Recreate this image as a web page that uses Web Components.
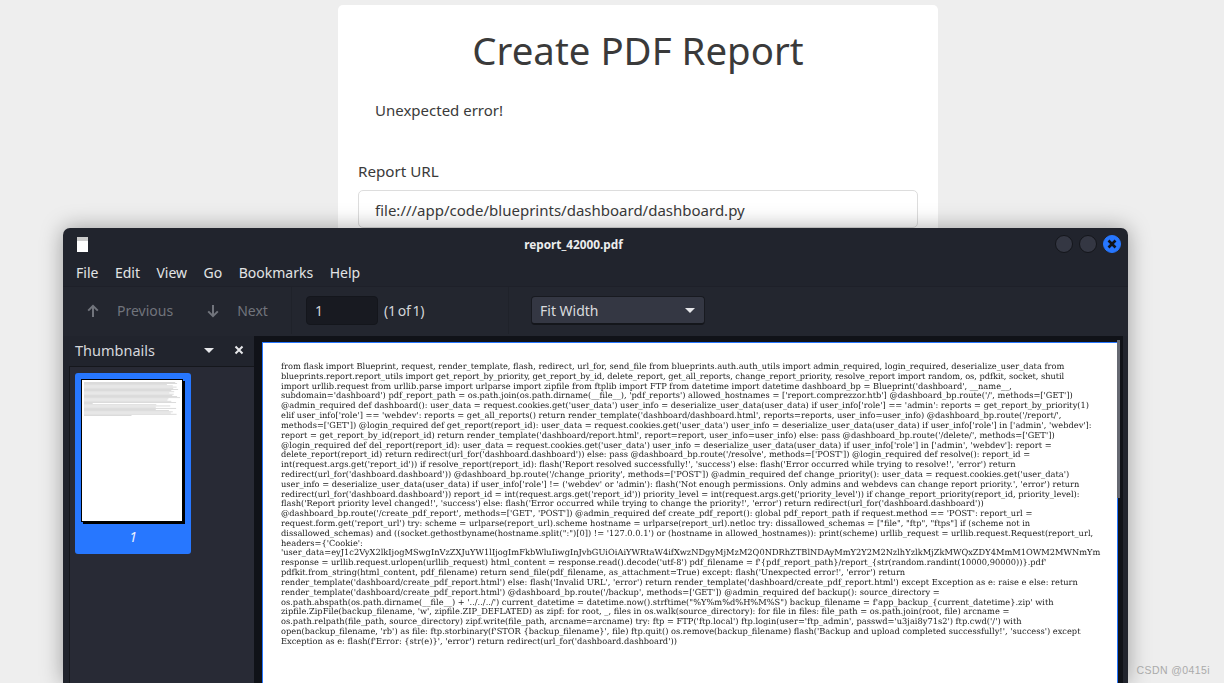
<!DOCTYPE html>
<html>
<head>
<meta charset="utf-8">
<title>Create PDF Report</title>
<style>
  html, body { margin: 0; height: 100%; overflow: hidden; background: #eeeeee; }
  body { position: relative; font-family: "Noto Sans", sans-serif; }
</style>
</head>
<body>
<report-form></report-form>
<pdf-viewer></pdf-viewer>
<csdn-mark>CSDN @0415i</csdn-mark>

<script>
const pdfLines = [
  "from flask import Blueprint, request, render_template, flash, redirect, url_for, send_file from blueprints.auth.auth_utils import admin_required, login_required, deserialize_user_data from",
  "blueprints.report.report_utils import get_report_by_priority, get_report_by_id, delete_report, get_all_reports, change_report_priority, resolve_report import random, os, pdfkit, socket, shutil",
  "import urllib.request from urllib.parse import urlparse import zipfile from ftplib import FTP from datetime import datetime dashboard_bp = Blueprint('dashboard', __name__,",
  "subdomain='dashboard') pdf_report_path = os.path.join(os.path.dirname(__file__), 'pdf_reports') allowed_hostnames = ['report.comprezzor.htb'] @dashboard_bp.route('/', methods=['GET'])",
  "@admin_required def dashboard(): user_data = request.cookies.get('user_data') user_info = deserialize_user_data(user_data) if user_info['role'] == 'admin': reports = get_report_by_priority(1)",
  "elif user_info['role'] == 'webdev': reports = get_all_reports() return render_template('dashboard/dashboard.html', reports=reports, user_info=user_info) @dashboard_bp.route('/report/',",
  "methods=['GET']) @login_required def get_report(report_id): user_data = request.cookies.get('user_data') user_info = deserialize_user_data(user_data) if user_info['role'] in ['admin', 'webdev']:",
  "report = get_report_by_id(report_id) return render_template('dashboard/report.html', report=report, user_info=user_info) else: pass @dashboard_bp.route('/delete/', methods=['GET'])",
  "@login_required def del_report(report_id): user_data = request.cookies.get('user_data') user_info = deserialize_user_data(user_data) if user_info['role'] in ['admin', 'webdev']: report =",
  "delete_report(report_id) return redirect(url_for('dashboard.dashboard')) else: pass @dashboard_bp.route('/resolve', methods=['POST']) @login_required def resolve(): report_id =",
  "int(request.args.get('report_id')) if resolve_report(report_id): flash('Report resolved successfully!', 'success') else: flash('Error occurred while trying to resolve!', 'error') return",
  "redirect(url_for('dashboard.dashboard')) @dashboard_bp.route('/change_priority', methods=['POST']) @admin_required def change_priority(): user_data = request.cookies.get('user_data')",
  "user_info = deserialize_user_data(user_data) if user_info['role'] != ('webdev' or 'admin'): flash('Not enough permissions. Only admins and webdevs can change report priority.', 'error') return",
  "redirect(url_for('dashboard.dashboard')) report_id = int(request.args.get('report_id')) priority_level = int(request.args.get('priority_level')) if change_report_priority(report_id, priority_level):",
  "flash('Report priority level changed!', 'success') else: flash('Error occurred while trying to change the priority!', 'error') return redirect(url_for('dashboard.dashboard'))",
  "@dashboard_bp.route('/create_pdf_report', methods=['GET', 'POST']) @admin_required def create_pdf_report(): global pdf_report_path if request.method == 'POST': report_url =",
  "request.form.get('report_url') try: scheme = urlparse(report_url).scheme hostname = urlparse(report_url).netloc try: dissallowed_schemas = [\"file\", \"ftp\", \"ftps\"] if (scheme not in",
  "dissallowed_schemas) and ((socket.gethostbyname(hostname.split(\":\")[0]) != '127.0.0.1') or (hostname in allowed_hostnames)): print(scheme) urllib_request = urllib.request.Request(report_url,",
  "headers={'Cookie':",
  "'user_data=eyJ1c2VyX2lkIjogMSwgInVzZXJuYW1lIjogImFkbWluIiwgInJvbGUiOiAiYWRtaW4ifXwzNDgyMjMzM2Q0NDRhZTBlNDAyMmY2Y2M2NzlhYzlkMjZkMWQxZDY4MmM1OWM2MWNmYm",
  "response = urllib.request.urlopen(urllib_request) html_content = response.read().decode('utf-8') pdf_filename = f'{pdf_report_path}/report_{str(random.randint(10000,90000))}.pdf'",
  "pdfkit.from_string(html_content, pdf_filename) return send_file(pdf_filename, as_attachment=True) except: flash('Unexpected error!', 'error') return",
  "render_template('dashboard/create_pdf_report.html') else: flash('Invalid URL', 'error') return render_template('dashboard/create_pdf_report.html') except Exception as e: raise e else: return",
  "render_template('dashboard/create_pdf_report.html') @dashboard_bp.route('/backup', methods=['GET']) @admin_required def backup(): source_directory =",
  "os.path.abspath(os.path.dirname(__file__) + '../../../') current_datetime = datetime.now().strftime(\"%Y%m%d%H%M%S\") backup_filename = f'app_backup_{current_datetime}.zip' with",
  "zipfile.ZipFile(backup_filename, 'w', zipfile.ZIP_DEFLATED) as zipf: for root, _, files in os.walk(source_directory): for file in files: file_path = os.path.join(root, file) arcname =",
  "os.path.relpath(file_path, source_directory) zipf.write(file_path, arcname=arcname) try: ftp = FTP('ftp.local') ftp.login(user='ftp_admin', passwd='u3jai8y71s2') ftp.cwd('/') with",
  "open(backup_filename, 'rb') as file: ftp.storbinary(f'STOR {backup_filename}', file) ftp.quit() os.remove(backup_filename) flash('Backup and upload completed successfully!', 'success') except",
  "Exception as e: flash(f'Error: {str(e)}', 'error') return redirect(url_for('dashboard.dashboard'))"
];

class ReportForm extends HTMLElement {
  constructor() {
    super();
    this.attachShadow({ mode: 'open' }).innerHTML = `
      <style>
        :host { display: block; width: 600px; margin: 5px 0 0 338px; box-sizing: border-box; height: 400px;
          background: #fff; border-radius: 5px; padding: 0 20px; color: #3a3a3a; font-family: "Noto Sans", sans-serif; }
        h1 { margin: 0; padding-top: 20px; font-size: 38.4px; line-height: 50px; font-weight: 400; text-align: center; }
        .flash { margin: 23px 0 0 17px; font-size: 15px; line-height: 24px; }
        label { display: block; margin-top: 37px; font-size: 15.2px; line-height: 24px; }
        .field { margin-top: 7px; height: 38px; box-sizing: border-box; border: 1px solid #ddd; border-radius: 5px;
          padding: 0 16px; font-size: 15px; line-height: 38px; }
      </style>
      <h1>Create PDF Report</h1>
      <div class="flash">Unexpected error!</div>
      <label>Report URL</label>
      <div class="field">file:///app/code/blueprints/dashboard/dashboard.py</div>
    `;
  }
}

class MenuBar extends HTMLElement {
  constructor() {
    super();
    this.attachShadow({ mode: 'open' }).innerHTML = `
      <style>
        :host { display: flex; height: 27px; box-sizing: border-box; padding: 0 0 2px 13px; gap: 16.5px; align-items: center;
          border-bottom: 1px solid #1e2029; font-size: 14px; color: #e3e4e6; }
      </style>
      <span>File</span><span>Edit</span><span>View</span><span>Go</span><span>Bookmarks</span><span>Help</span>
    `;
  }
}

class ViewerToolbar extends HTMLElement {
  constructor() {
    super();
    this.attachShadow({ mode: 'open' }).innerHTML = `
      <style>
        :host { display: flex; height: 49px; box-sizing: border-box; padding-bottom: 2px; align-items: center; font-size: 14px; color: #71747c; background: #23262f; }
        .nav { display: flex; align-items: center; width: 229px; padding-left: 24px; box-sizing: border-box; height: 100%; border-right: 1px solid #1f222a; }
        .nav svg { width: 12px; height: 14px; flex: none; }
        .nav span { margin: 0 34px 0 18px; }
        .nav span:last-child { margin-right: 0; }
        .pager { display: flex; align-items: center; height: 100%; width: 217px; box-sizing: border-box; padding-left: 14px; border-right: 1px solid #1f222a; color: #d3d5d9; }
        .num { width: 72px; height: 29px; box-sizing: border-box; background: #181a21; border: 1px solid #14161c; border-radius: 4px;
          line-height: 27px; padding-left: 8px; margin-right: 6px; }
        .of { letter-spacing: -.3px; word-spacing: -1.2px; }
        .fit { margin-left: 22px; width: 174px; height: 29px; box-sizing: border-box; background: #343743; border: 1px solid #181a20; border-bottom: 2px solid #14161b;
          border-radius: 4px; display: flex; align-items: center; justify-content: space-between; padding: 0 9px 0 8px; color: #dadbde; }
        .caret { width: 0; height: 0; border: 5px solid transparent; border-top: 5px solid #e6e7ea; border-bottom: 0; }
      </style>
      <div class="nav">
        <svg viewBox="0 0 12 14"><path d="M6 13V2M1.2 6.6 6 1.8l4.8 4.8" fill="none" stroke="#71747c" stroke-width="2"/></svg>
        <span>Previous</span>
        <svg viewBox="0 0 12 14"><path d="M6 1v11M1.2 7.4 6 12.2l4.8-4.8" fill="none" stroke="#71747c" stroke-width="2"/></svg>
        <span>Next</span>
      </div>
      <div class="pager"><div class="num">1</div><div class="of">(1 of 1)</div></div>
      <div class="fit"><span>Fit Width</span><i class="caret"></i></div>
    `;
  }
}

class ThumbnailPanel extends HTMLElement {
  constructor() {
    super();
    // tiny preview of the page, one bar per text line
    const bars = pdfLines.map((l, i) => {
      const w = Math.min(96, l.length * 0.485);
      return `<rect x="2" y="${(2 + i * 1.18).toFixed(2)}" width="${w.toFixed(1)}" height="0.72"/>`;
    }).join('');
    this.attachShadow({ mode: 'open' }).innerHTML = `
      <style>
        :host { display: flex; flex-direction: column; width: 185px; flex: none; font-size: 14px; color: #d5d7db; }
        .head { display: flex; align-items: center; height: 30px; padding: 0 0 2px 6px; box-sizing: border-box; flex: none; }
        .head span { flex: 1; font-size: 14.5px; }
        .caret { width: 0; height: 0; border: 5px solid transparent; border-top: 5px solid #e6e7ea; border-bottom: 0; margin-right: 20px; }
        .head svg { width: 10px; height: 10px; margin-right: 10px; }
        .list { flex: 1; background: #282a35; border: 1px solid #15171c; border-right: 0; border-bottom: 0; padding: 6px 6px 6px 5px; }
        .card { width: 116px; height: 181px; background: #2777ff; border-radius: 3px; box-sizing: border-box; padding-top: 6px; text-align: center; }
        .sheet { display: block; width: 102px; height: 143px; box-sizing: border-box; margin-left: 6px; background: #fff;
          border: 1px solid #000; box-shadow: 2px 2px 0 #000; overflow: hidden; }
        .sheet svg { display: block; width: 100px; height: 141px; filter: blur(.25px); }
        .num { font-style: italic; color: #e8f0ff; line-height: 18px; margin-top: 6px; }
      </style>
      <div class="head"><span>Thumbnails</span><i class="caret"></i>
        <svg viewBox="0 0 10 10"><path d="M1.5 1.5l7 7M8.5 1.5l-7 7" stroke="#e6e7ea" stroke-width="2" fill="none"/></svg>
      </div>
      <div class="list"><div class="card">
        <div class="sheet"><svg viewBox="0 0 100 141" fill="#cdcdcd">${bars}</svg></div>
        <div class="num">1</div>
      </div></div>
    `;
  }
}

class PdfPage extends HTMLElement {
  constructor() {
    super();
    const rows = pdfLines.map(l => `<div class="ln">${l.replace(/&/g, '&amp;')}</div>`).join('');
    this.attachShadow({ mode: 'open' }).innerHTML = `
      <style>
        :host { display: block; flex: 1; min-width: 0; background: #101218; padding: 6px 0 0 8px; position: relative; }
        .page { height: 400px; width: 856px; box-sizing: border-box; background: #fff; border: 1px solid #2777ff; border-bottom: 0;
          padding: 19px 15px 0 18px; }
        .ln { font-family: "DejaVu Serif", serif; font-size: 8.28px; line-height: 9.82px; height: 9.82px; color: #222; white-space: nowrap; text-rendering: geometricPrecision; filter: blur(.2px); }
        .ln:nth-child(2) { letter-spacing: -.045px; }
        .thumb { position: absolute; right: 3px; top: 4px; width: 3px; height: 158px; background: #666972; }
      </style>
      <div class="page">${rows}</div>
      <div class="thumb"></div>
    `;
  }
}

class PdfViewer extends HTMLElement {
  constructor() {
    super();
    this.attachShadow({ mode: 'open' }).innerHTML = `
      <style>
        :host { display: flex; flex-direction: column; position: absolute; left: 63px; top: 228px; width: 1065px; height: 455px;
          background: #21242d; border-radius: 7px 7px 0 0; box-shadow: 0 0 22px rgba(0,0,0,.35); font-family: "Noto Sans", sans-serif; overflow: clip; overflow-clip-margin: 40px; }
        .title { height: 32px; display: flex; align-items: center; position: relative; flex: none; }
        .doc { width: 11px; height: 15px; margin-left: 14px; background: linear-gradient(#ccc 0 4px, #fff 4px); }
        .name { position: absolute; left: 0; right: 44px; text-align: center; font-size: 11.8px; font-weight: 700; color: #eceded; }
        .btns { margin-left: auto; display: flex; gap: 6px; margin-right: 7px; position: relative; }
        .btn { width: 18px; height: 18px; border-radius: 50%; background: #343743; border: 1px solid #14161b; box-sizing: border-box; }
        .btn.close { background: #2777ff; border-color: #2777ff; display: flex; align-items: center; justify-content: center; }
        .btn svg { width: 10px; height: 10px; }
        .main { flex: 1; display: flex; padding: 0 5px 0 6px; min-height: 0; }
      </style>
      <div class="title">
        <div class="doc"></div>
        <div class="name">report_42000.pdf</div>
        <div class="btns"><div class="btn"></div><div class="btn"></div>
          <div class="btn close"><svg viewBox="0 0 10 10"><path d="M1.5 1.5l7 7M8.5 1.5l-7 7" stroke="#10131a" stroke-width="2.6"/></svg></div>
        </div>
      </div>
      <menu-bar></menu-bar>
      <viewer-toolbar></viewer-toolbar>
      <div class="main"><thumbnail-panel></thumbnail-panel><pdf-page></pdf-page></div>
    `;
  }
}

class CsdnMark extends HTMLElement {
  constructor() {
    super();
    this.attachShadow({ mode: 'open' }).innerHTML = `
      <style>
        :host { position: absolute; right: 14px; bottom: 7px; font-family: "Liberation Sans", sans-serif; font-size: 10.5px; letter-spacing: .4px; color: #aaa; }
      </style>
      <slot></slot>
    `;
  }
}

customElements.define('report-form', ReportForm);
customElements.define('menu-bar', MenuBar);
customElements.define('viewer-toolbar', ViewerToolbar);
customElements.define('thumbnail-panel', ThumbnailPanel);
customElements.define('pdf-page', PdfPage);
customElements.define('pdf-viewer', PdfViewer);
customElements.define('csdn-mark', CsdnMark);
</script>
</body>
</html>
